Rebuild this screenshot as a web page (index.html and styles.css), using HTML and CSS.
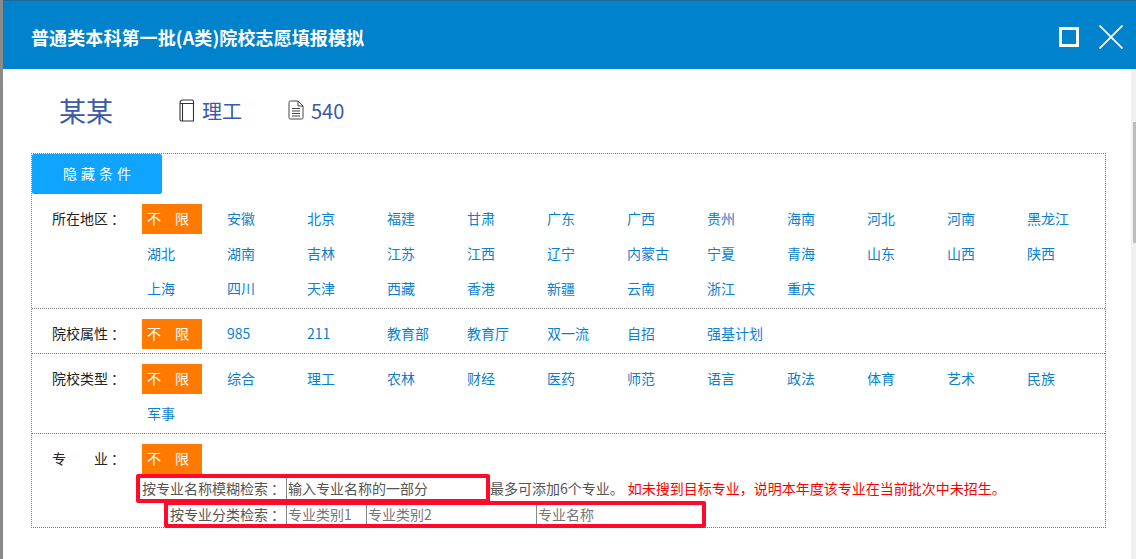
FILE: index.html
```html
<!DOCTYPE html>
<html lang="zh-CN">
<head>
<meta charset="utf-8">
<title>普通类本科第一批(A类)院校志愿填报模拟</title>
<link rel="stylesheet" href="styles.css">
</head>
<body>
<div class="window">
  <header class="titlebar">
    <h1 class="title">普通类本科第一批(A类)院校志愿填报模拟</h1>
    <div class="controls">
      <svg class="icon-max" width="20" height="20" viewBox="0 0 20 20"><rect x="1.5" y="1.5" width="17" height="17" fill="none" stroke="#fff" stroke-width="3"/></svg>
      <svg class="icon-close" width="24" height="24" viewBox="0 0 24 24"><path d="M0.5 0.5L23.5 23.5M23.5 0.5L0.5 23.5" stroke="#fff" stroke-width="1.8"/></svg>
    </div>
  </header>
  <div class="body">
    <main class="content">
      <div class="profile">
        <span class="name">某某</span>
        <span class="meta meta-type">
          <svg width="16" height="23" viewBox="0 0 16 23"><path d="M1 4.5V20.5Q1 22 2.5 22H14.5V4.5M1 4.5Q1 1 4 1H13Q14.5 1 14.5 2.5V4.5H1M3.5 4.5V22" fill="none" stroke="#333" stroke-width="1.1"/></svg>
          <span>理工</span>
        </span>
        <span class="meta meta-score">
          <svg width="16" height="20" viewBox="0 0 16 20"><path d="M1 2.5Q1 1 2.5 1H10L15 6V17.5Q15 19 13.5 19H2.5Q1 19 1 17.5ZM10 1V6H15M4 8.5H12M4 11H12M4 13.5H12M4 16H12" fill="none" stroke="#444" stroke-width="1"/></svg>
          <span class="score">540</span>
        </span>
      </div>
      <div class="conditions">
        <button class="toggle" type="button">隐藏条件</button>
        <section class="cond cond-first">
          <div class="label">所在地区<span class="colon">：</span></div>
          <div class="opts">
            <a class="opt on">不&emsp;限</a><a class="opt">安徽</a><a class="opt">北京</a><a class="opt">福建</a><a class="opt">甘肃</a><a class="opt">广东</a><a class="opt">广西</a><a class="opt">贵州</a><a class="opt">海南</a><a class="opt">河北</a><a class="opt">河南</a><a class="opt">黑龙江</a>
            <a class="opt">湖北</a><a class="opt">湖南</a><a class="opt">吉林</a><a class="opt">江苏</a><a class="opt">江西</a><a class="opt">辽宁</a><a class="opt">内蒙古</a><a class="opt">宁夏</a><a class="opt">青海</a><a class="opt">山东</a><a class="opt">山西</a><a class="opt">陕西</a>
            <a class="opt">上海</a><a class="opt">四川</a><a class="opt">天津</a><a class="opt">西藏</a><a class="opt">香港</a><a class="opt">新疆</a><a class="opt">云南</a><a class="opt">浙江</a><a class="opt">重庆</a>
          </div>
        </section>
        <section class="cond">
          <div class="label">院校属性<span class="colon">：</span></div>
          <div class="opts">
            <a class="opt on">不&emsp;限</a><a class="opt">985</a><a class="opt">211</a><a class="opt">教育部</a><a class="opt">教育厅</a><a class="opt">双一流</a><a class="opt">自招</a><a class="opt">强基计划</a>
          </div>
        </section>
        <section class="cond">
          <div class="label">院校类型<span class="colon">：</span></div>
          <div class="opts">
            <a class="opt on">不&emsp;限</a><a class="opt">综合</a><a class="opt">理工</a><a class="opt">农林</a><a class="opt">财经</a><a class="opt">医药</a><a class="opt">师范</a><a class="opt">语言</a><a class="opt">政法</a><a class="opt">体育</a><a class="opt">艺术</a><a class="opt">民族</a>
            <a class="opt">军事</a>
          </div>
        </section>
        <section class="cond cond-major">
          <div class="label">专&emsp;&emsp;业<span class="colon">：</span></div>
          <div class="opts opts-single">
            <a class="opt on">不&emsp;限</a>
          </div>
        </section>
        <div class="search">
          <div class="search-row">
            <label class="search-label">按专业名称模糊检索<span class="colon">：</span></label>
            <input class="field field-name" type="text" placeholder="输入专业名称的一部分">
            <span class="hint">最多可添加6个专业。</span>
            <span class="warn">如未搜到目标专业，说明本年度该专业在当前批次中未招生。</span>
          </div>
          <div class="search-row">
            <label class="search-label">按专业分类检索<span class="colon">：</span></label>
            <input class="field field-cat1" type="text" placeholder="专业类别1">
            <input class="field field-cat2" type="text" placeholder="专业类别2">
            <input class="field field-major" type="text" placeholder="专业名称">
          </div>
          <div class="mark mark-one"></div>
          <div class="mark mark-two"></div>
        </div>
      </div>
    </main>
    <div class="scrollbar"><div class="thumb"></div></div>
  </div>
</div>
</body>
</html>
```

FILE: styles.css
```css
* { box-sizing: border-box; }
html, body { margin: 0; height: 100%; overflow: hidden; }
body {
  background: #8a8a8a;
  font-family: "Noto Sans CJK SC", "Liberation Sans", sans-serif;
  font-size: 14px;
  color: #222;
}
.colon { margin-left: 3px; margin-right: -3px; }
.window {
  margin-left: 3px;
  height: 559px;
  background: #fff;
  display: flex;
  flex-direction: column;
}
.titlebar {
  height: 69px;
  flex: none;
  background: #0082cc;
  border-top: 1px solid #1c6a98;
  display: flex;
  align-items: center;
  justify-content: space-between;
  padding: 5px 13px 1px 28px;
  color: #fff;
}
.title { margin: 0; font-size: 18px; font-weight: 700; line-height: 24px; letter-spacing: 0.1px; }
.controls { display: flex; align-items: center; gap: 20px; }
.body { flex: 1; display: flex; min-height: 0; }
.content { flex: 1; min-width: 0; padding-left: 28px; }
.profile {
  height: 84px;
  display: flex;
  align-items: center;
  padding: 0 0 2px 28px;
  color: #3a5aa8;
}
.name { font-size: 27px; width: 120px; }
.meta { display: flex; align-items: center; font-size: 20px; }
.meta-type { width: 109px; gap: 7px; }
.meta-score { gap: 7px; }
.score { font-size: 20px; }
.conditions {
  width: 1075px;
  height: 375px;
  border: 1px dotted #777;
}
.toggle {
  display: block;
  width: 130px;
  height: 40px;
  border: 0;
  border-radius: 2px;
  background: #0fa5ff;
  color: #fff;
  font: inherit;
  letter-spacing: 4px;
  padding: 0 0 2px 4px;
}
.cond {
  display: flex;
  padding: 10px 0 0 20px;
  border-bottom: 1px dotted #777;
}
.label { width: 90px; flex: none; line-height: 28px; color: #222; }
.opts {
  display: grid;
  grid-template-columns: repeat(12, 80px);
  grid-auto-rows: 35px;
  margin-bottom: -1px;
}
.opts-single { grid-auto-rows: 30px; margin-bottom: 0; }
.opt { height: 30px; line-height: 28px; padding-left: 5px; color: #0b7fd0; }
.opt.on { width: 60px; background: #ff7a00; color: #fff; }
.cond-major { border-bottom: 0; }
.search { position: relative; margin-top: 2px; }
.search-row { display: flex; height: 25px; align-items: center; padding-bottom: 2px; }
.search-row + .search-row { margin-top: 1px; }
.search-label { width: 254px; flex: none; text-align: right; padding-right: 4px; color: #555; white-space: nowrap; }
.field {
  height: 23px;
  border: 0;
  border-left: 1px solid #888;
  padding: 0 0 0 1px;
  background: transparent;
  font: inherit;
  color: #555;
  border-radius: 0;
  outline: none;
}
.field::placeholder { color: #777; opacity: 1; }
.field-name { width: 200px; }
.field-name::placeholder { color: #555; }
.field-cat1 { width: 80px; }
.field-cat2 { width: 170px; }
.field-major { width: 166px; }
.hint { margin-left: 4px; color: #555; white-space: nowrap; }
.warn { margin-left: 4px; color: #f00; white-space: nowrap; }
.mark {
  position: absolute;
  border: 4px solid #ff0a2a;
  border-radius: 2px;
  pointer-events: none;
}
.mark-one { left: 104px; top: -2px; width: 354px; height: 29px; }
.mark-two { left: 132px; top: 25px; width: 542px; height: 27px; }
.scrollbar { width: 5px; flex: none; background: #f0f0f0; padding-top: 53px; }
.thumb { width: 3px; height: 121px; margin-left: 2px; background: #bdbdbd; }
```
